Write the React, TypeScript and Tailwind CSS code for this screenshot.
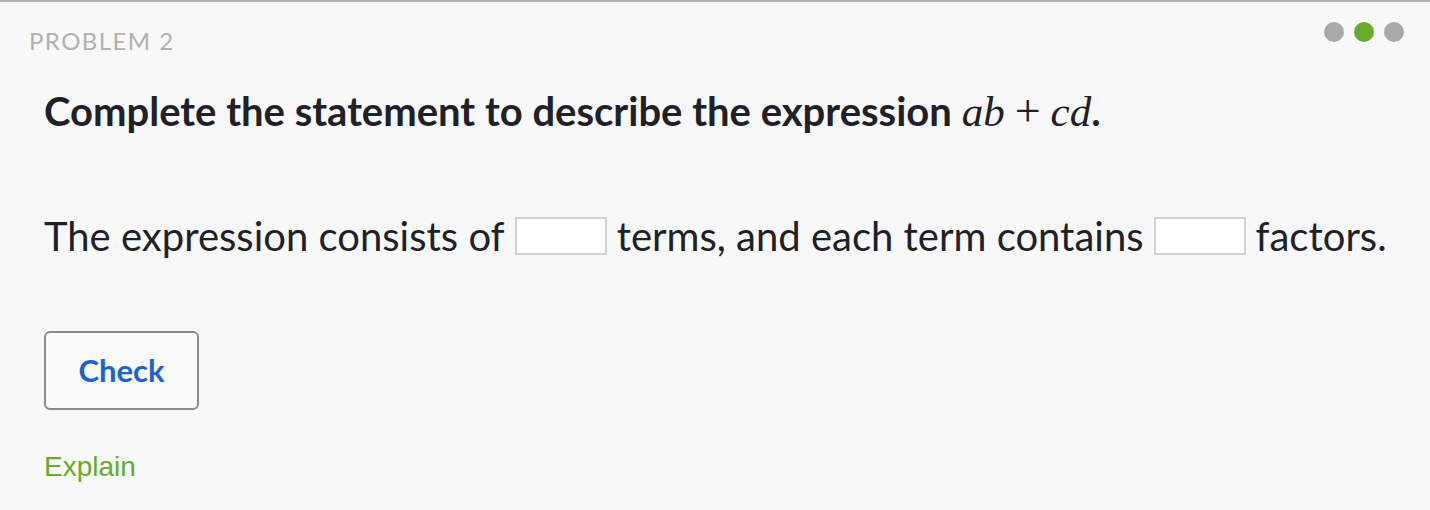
import React from 'react';

// Small status dots in the top-right corner
const ProgressDots: React.FC = () => (
  <div className="flex items-center gap-[10px]">
    <span className="h-5 w-5 rounded-full bg-[#a9a9a9]" />
    <span className="h-5 w-5 rounded-full bg-[#69ac2c]" />
    <span className="h-5 w-5 rounded-full bg-[#a9a9a9]" />
  </div>
);

const Blank: React.FC = () => (
  <input
    type="text"
    aria-label="answer"
    className="mx-[10px] h-[38px] w-[92px] shrink-0 border-2 border-[#d2d2d2] bg-white outline-none"
  />
);

const App: React.FC = () => {
  return (
    <div className="h-[510px] w-[1430px] overflow-hidden border-t-2 border-[#b4b4b4] bg-[#f8f8f8] font-['Lato','Open_Sans',sans-serif] text-[#202128]">
      <div className="flex items-start justify-between pl-[29px] pr-[26px] pt-[20px]">
        <div className="mt-[7px] text-[24px] leading-[24px] tracking-[0.06em] text-[#b1b1b1]">PROBLEM 2</div>
        <ProgressDots />
      </div>

      <div className="px-[44px]">
        <h2 className="mt-[34px] whitespace-nowrap text-[40px] font-bold leading-[48px]">
          Complete the statement to describe the expression{' '}
          <span className="font-['Liberation_Serif',serif] text-[43px] font-normal italic">ab</span>
          <span className="mx-[10px] font-['Liberation_Serif',serif] text-[46px] font-light">+</span>
          <span className="font-['Liberation_Serif',serif] text-[43px] font-normal italic">cd</span>.
        </h2>

        <p className="mt-[76px] flex items-center whitespace-nowrap text-[40px] leading-[48px]">
          <span>The expression consists of</span>
          <Blank />
          <span>terms, and each term contains</span>
          <Blank />
          <span>factors.</span>
        </p>

        <button
          type="button"
          className="mt-[71px] flex h-[79px] w-[155px] items-center justify-center rounded-[6px] border-2 border-[#8c8c8c] bg-[#fafafa] text-[31px] font-bold text-[#1c62d8]"
        >
          Check
        </button>

        <div className="mt-[40px] font-['Liberation_Sans',Arial,sans-serif] text-[28px] leading-[34px] text-[#68ab2a]">
          Explain
        </div>
      </div>
    </div>
  );
};

export default App;
